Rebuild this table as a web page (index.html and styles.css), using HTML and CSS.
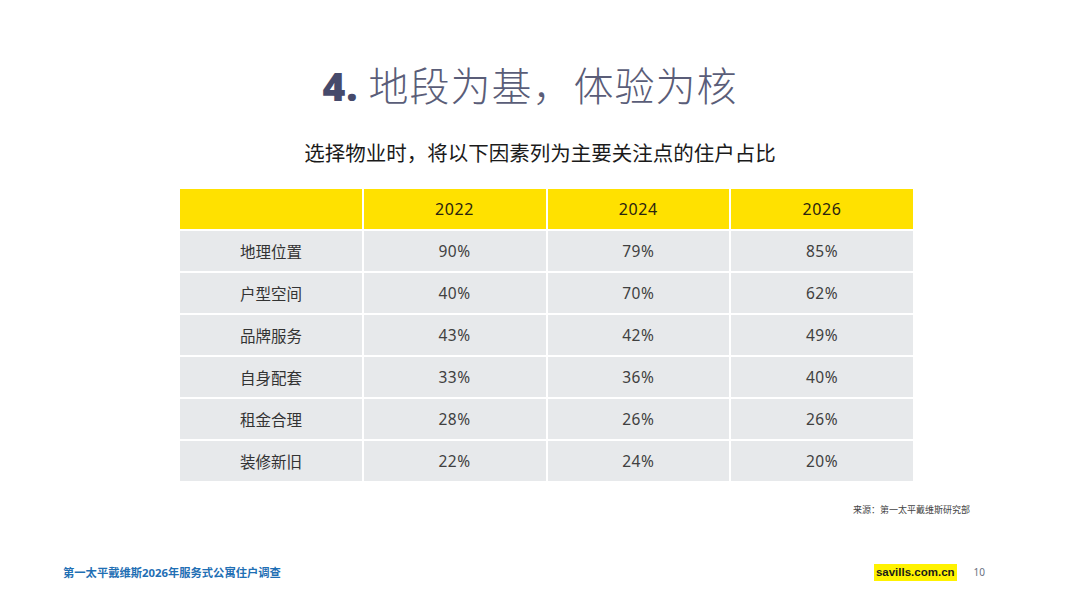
FILE: index.html
```html
<!DOCTYPE html>
<html lang="zh-CN">
<head>
<meta charset="utf-8">
<link rel="stylesheet" href="styles.css">
</head>
<body>
<div class="page">
  <h1 class="title"><span class="num">4.</span> 地段为基，体验为核</h1>
  <p class="subtitle">选择物业时，将以下因素列为主要关注点的住户占比</p>
  <div class="table">
    <div class="cell head"></div>
    <div class="cell head">2022</div>
    <div class="cell head">2024</div>
    <div class="cell head">2026</div>

    <div class="cell label">地理位置</div>
    <div class="cell">90%</div>
    <div class="cell">79%</div>
    <div class="cell">85%</div>

    <div class="cell label">户型空间</div>
    <div class="cell">40%</div>
    <div class="cell">70%</div>
    <div class="cell">62%</div>

    <div class="cell label">品牌服务</div>
    <div class="cell">43%</div>
    <div class="cell">42%</div>
    <div class="cell">49%</div>

    <div class="cell label">自身配套</div>
    <div class="cell">33%</div>
    <div class="cell">36%</div>
    <div class="cell">40%</div>

    <div class="cell label">租金合理</div>
    <div class="cell">28%</div>
    <div class="cell">26%</div>
    <div class="cell">26%</div>

    <div class="cell label">装修新旧</div>
    <div class="cell">22%</div>
    <div class="cell">24%</div>
    <div class="cell">20%</div>
  </div>
  <p class="source">来源：第一太平戴维斯研究部</p>
  <div class="footer">
    <span class="report">第一太平戴维斯2026年服务式公寓住户调查</span>
    <div class="footer-right">
      <span class="site">savills.com.cn</span>
      <span class="pageno">10</span>
    </div>
  </div>
</div>
</body>
</html>
```
FILE: styles.css
```css
* { box-sizing: border-box; }
html, body { margin: 0; padding: 0; background: #ffffff; }
body {
  width: 1080px;
  height: 608px;
  overflow: hidden;
  font-family: "Noto Sans", "Noto Sans CJK SC", sans-serif;
}
.page {
  display: flex;
  flex-direction: column;
  padding-top: 59px;
}
.title {
  margin: 0;
  height: 50px;
  line-height: 50px;
  text-align: center;
  padding-right: 20px;
  font-family: "Noto Sans CJK SC", sans-serif;
  font-weight: 300;
  font-size: 40px;
  color: #5a5d78;
  letter-spacing: 1px;
}
.title .num {
  font-family: "Open Sans", "Noto Sans", sans-serif;
  font-weight: 800;
  color: #464a6b;
  font-size: 39px;
}
.subtitle {
  margin: 28px 0 0;
  height: 30px;
  line-height: 30px;
  text-align: center;
  font-family: "Noto Sans CJK SC", sans-serif;
  font-size: 20.5px;
  color: #1a1a1a;
}
.table {
  margin: 22px 0 0 180px;
  width: 733px;
  display: grid;
  grid-template-columns: repeat(4, 1fr);
  grid-auto-rows: 40px;
  gap: 2px;
  background: #ffffff;
}
.cell {
  background: #e7e9eb;
  display: flex;
  align-items: center;
  justify-content: center;
  font-family: "Noto Sans", "Noto Sans CJK SC", sans-serif;
  font-size: 15.5px;
  letter-spacing: 0.6px;
  color: #404040;
}
.cell.head {
  background: #ffe100;
  color: #2a2410;
  font-size: 16px;
}
.cell.label {
  justify-content: flex-start;
  padding-left: 60px;
  font-family: "Noto Sans CJK SC", sans-serif;
  font-size: 15.5px;
  letter-spacing: 0;
  color: #333333;
}
.source {
  margin: 21px 0 0;
  height: 16px;
  line-height: 16px;
  text-align: right;
  padding-right: 110px;
  font-family: "Noto Sans CJK SC", sans-serif;
  font-size: 9px;
  color: #444444;
}
.footer {
  margin-top: 44px;
  height: 20px;
  display: flex;
  align-items: center;
  justify-content: space-between;
  padding: 0 95px 0 63px;
}
.report {
  font-family: "Noto Sans", "Noto Sans CJK SC", sans-serif;
  font-weight: 700;
  font-size: 11.3px;
  color: #1f6fb4;
}
.footer-right {
  display: flex;
  align-items: center;
  gap: 17px;
}
.site {
  background: #fff200;
  padding: 1px 2px;
  font-family: "Liberation Sans", "Noto Sans", sans-serif;
  font-weight: 700;
  font-size: 11.5px;
  color: #1a1a1a;
  line-height: 15px;
}
.pageno {
  font-family: "Noto Sans", sans-serif;
  font-size: 10px;
  color: #6a7080;
}
```
